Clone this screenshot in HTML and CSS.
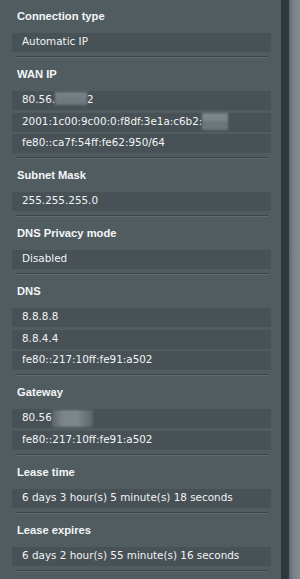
FILE: index.html
```html
<!DOCTYPE html>
<html lang="en">
<head>
  <meta charset="UTF-8">
  <meta name="viewport" content="width=device-width, initial-scale=1.0">
  <title>Internet Status</title>
  <link rel="stylesheet" href="styles.css">
</head>
<body>

  <div class="page">
    <div class="panel">

      <div class="group">
        <div class="label">Connection type</div>
        <div class="value">Automatic IP</div>
      </div>

      <div class="group">
        <div class="label">WAN IP</div>
        <div class="value">80.56.<span class="mask mask-wan"></span>2</div>
        <div class="value">2001:1c00:9c00:0:f8df:3e1a:c6b2:<span class="mask mask-v6"></span></div>
        <div class="value">fe80::ca7f:54ff:fe62:950/64</div>
      </div>

      <div class="group">
        <div class="label">Subnet Mask</div>
        <div class="value">255.255.255.0</div>
      </div>

      <div class="group">
        <div class="label">DNS Privacy mode</div>
        <div class="value">Disabled</div>
      </div>

      <div class="group">
        <div class="label">DNS</div>
        <div class="value">8.8.8.8</div>
        <div class="value">8.8.4.4</div>
        <div class="value">fe80::217:10ff:fe91:a502</div>
      </div>

      <div class="group">
        <div class="label">Gateway</div>
        <div class="value">80.56<span class="mask mask-gw"></span></div>
        <div class="value">fe80::217:10ff:fe91:a502</div>
      </div>

      <div class="group">
        <div class="label">Lease time</div>
        <div class="value">6 days 3 hour(s) 5 minute(s) 18 seconds</div>
      </div>

      <div class="group">
        <div class="label">Lease expires</div>
        <div class="value">6 days 2 hour(s) 55 minute(s) 16 seconds</div>
      </div>

    </div>
    <div class="track"></div>
    <div class="edge"></div>
  </div>

</body>
</html>
```

FILE: styles.css
```css
body { margin: 0; background: #515c61; font-family: "Liberation Sans", Arial, sans-serif; color: #f2f4f5; }

.page { display: flex; height: 579px; overflow: hidden; }

.panel { width: 281px; padding: 0 10px 0 12px; box-sizing: border-box; }

.group {
  display: flex; flex-direction: column; gap: 2.5px;
  padding-bottom: 4px; margin-bottom: 2px; position: relative;
}
.group::after {
  content: ""; position: absolute; left: 4px; right: 3px; bottom: -2px;
  height: 1px; background: #3b464b; border-bottom: 1px solid #5f6b71;
}

.label {
  font-size: 11.2px; font-weight: bold; line-height: 14px;
  padding: 9px 0 0 5px; margin-bottom: 7.5px; color: #f4f6f7;
}

.value {
  background: #475156; height: 19px; box-sizing: border-box;
  font-family: "DejaVu Sans", Verdana, sans-serif;
  font-size: 10.4px; line-height: 17px; padding: 0 0 2px 10px;
  white-space: nowrap;
}

.mask {
  display: inline-block; height: 13px; vertical-align: middle;
  filter: blur(1.2px);
}
.mask-wan { width: 32px; background: linear-gradient(#7a8488, #6c767a); margin-top: -4px; }
.mask-v6 { width: 26px; height: 17px; background: linear-gradient(#7c868a 50%, #6d777b 50%); }
.mask-gw { width: 41px; height: 17px; background: linear-gradient(90deg, #5a656a, #7b8589 25%, #7f898d 60%, #5a656a); }

.track { width: 8px; background: #2e393e; }
.edge { flex: 1; background: linear-gradient(90deg, #5c676c, #788388 40%, #838d92); }
```
